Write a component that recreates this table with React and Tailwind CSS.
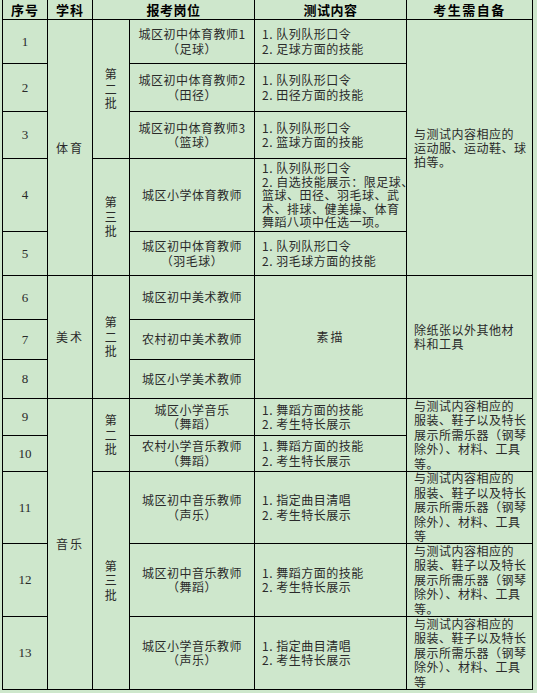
import React from "react";

const F = { fontFamily: '"Noto Sans CJK SC", "Noto Sans", sans-serif' };

function Cell({ className = "", children }) {
  return (
    <div className={"bg-[#cee7cc] overflow-hidden text-[12px] tracking-[0.5px] text-[#2a2a2a] " + className}>
      {children}
    </div>
  );
}

function Lines({ lines, className = "" }) {
  return (
    <div className={"flex flex-col " + className}>
      {lines.map((l, i) => (
        <span key={i} className="whitespace-pre">{l}</span>
      ))}
    </div>
  );
}

function Vert({ text }) {
  return (
    <div className="flex flex-col items-center leading-[14.5px]">
      {text.split("").map((c, i) => (
        <span key={i}>{c}</span>
      ))}
    </div>
  );
}

function Num({ n, row }) {
  return (
    <Cell className={"col-start-1 flex items-center justify-center " + row}>
      <span className="text-[13px] tracking-normal" style={{ fontFamily: '"Liberation Serif", serif' }}>{n}</span>
    </Cell>
  );
}

const music = ["与测试内容相应的", "服装、鞋子以及特长", "展示所需乐器（钢琴", "除外）、材料、工具"];

export default function App() {
  return (
    <div className="w-full h-[693px] bg-[#cee7cc] overflow-hidden" style={F}>
      <div
        className="ml-[2px] w-[531px] bg-black grid gap-px px-px pb-px grid-cols-[44px_44px_36px_124px_151px_125px] grid-rows-[19px_43px_47px_46px_72px_43px_43px_39px_38px_36px_35px_71px_72px_72px]"
      >
        {/* header */}
        <Cell className="row-start-1 col-start-1 flex items-center justify-center font-bold text-[13px] text-black tracking-[1px]">序号</Cell>
        <Cell className="row-start-1 col-start-2 flex items-center justify-center font-bold text-[13px] text-black tracking-[1px]">学科</Cell>
        <Cell className="row-start-1 col-start-3 col-span-2 flex items-center justify-center font-bold text-[13px] text-black tracking-[0.5px]">报考岗位</Cell>
        <Cell className="row-start-1 col-start-5 flex items-center justify-center font-bold text-[13px] text-black tracking-[0.5px]">测试内容</Cell>
        <Cell className="row-start-1 col-start-6 flex items-center justify-center font-bold text-[13px] text-black tracking-[1.5px]">考生需自备</Cell>

        {/* numbers */}
        <Num n="1" row="row-start-2" />
        <Num n="2" row="row-start-3" />
        <Num n="3" row="row-start-4" />
        <Num n="4" row="row-start-5" />
        <Num n="5" row="row-start-6" />
        <Num n="6" row="row-start-7" />
        <Num n="7" row="row-start-8" />
        <Num n="8" row="row-start-9" />
        <Num n="9" row="row-start-10" />
        <Num n="10" row="row-start-11" />
        <Num n="11" row="row-start-12" />
        <Num n="12" row="row-start-13" />
        <Num n="13" row="row-start-14" />

        {/* subjects */}
        <Cell className="col-start-2 row-start-2 row-span-5 flex items-center justify-center tracking-[2px]">体育</Cell>
        <Cell className="col-start-2 row-start-7 row-span-3 flex items-center justify-center tracking-[2px]">美术</Cell>
        <Cell className="col-start-2 row-start-10 row-span-5 flex items-center justify-center tracking-[2px]">音乐</Cell>

        {/* batches */}
        <Cell className="col-start-3 row-start-2 row-span-3 flex items-center justify-center"><Vert text="第二批" /></Cell>
        <Cell className="col-start-3 row-start-5 row-span-2 flex items-center justify-center"><Vert text="第三批" /></Cell>
        <Cell className="col-start-3 row-start-7 row-span-3 flex items-center justify-center"><Vert text="第二批" /></Cell>
        <Cell className="col-start-3 row-start-10 row-span-2 flex items-center justify-center"><Vert text="第二批" /></Cell>
        <Cell className="col-start-3 row-start-12 row-span-3 flex items-center justify-center"><Vert text="第三批" /></Cell>

        {/* posts */}
        {[
          ["row-start-2", ["城区初中体育教师1", "（足球）"]],
          ["row-start-3", ["城区初中体育教师2", "（田径）"]],
          ["row-start-4", ["城区初中体育教师3", "（篮球）"]],
          ["row-start-5", ["城区小学体育教师"]],
          ["row-start-6", ["城区初中体育教师", "（羽毛球）"]],
          ["row-start-7", ["城区初中美术教师"]],
          ["row-start-8", ["农村初中美术教师"]],
          ["row-start-9", ["城区小学美术教师"]],
          ["row-start-10", ["城区小学音乐", "（舞蹈）"]],
          ["row-start-11", ["农村小学音乐教师", "（舞蹈）"]],
          ["row-start-12", ["城区初中音乐教师", "（声乐）"]],
          ["row-start-13", ["城区初中音乐教师", "（舞蹈）"]],
          ["row-start-14", ["城区小学音乐教师", "（声乐）"]],
        ].map(([r, lines], i) => (
          <Cell key={i} className={"col-start-4 flex items-center justify-center " + r}>
            <Lines lines={lines} className="items-center leading-[14.5px]" />
          </Cell>
        ))}

        {/* test contents */}
        <Cell className="col-start-5 row-start-2 flex items-center pl-[7px]"><Lines lines={["1. 队列队形口令", "2. 足球方面的技能"]} className="leading-[14.5px]" /></Cell>
        <Cell className="col-start-5 row-start-3 flex items-center pl-[7px]"><Lines lines={["1. 队列队形口令", "2. 田径方面的技能"]} className="leading-[14.5px]" /></Cell>
        <Cell className="col-start-5 row-start-4 flex items-center pl-[7px]"><Lines lines={["1. 队列队形口令", "2. 篮球方面的技能"]} className="leading-[14.5px]" /></Cell>
        <Cell className="col-start-5 row-start-5 flex items-center pl-[7px]">
          <Lines
            lines={["1. 队列队形口令", "2. 自选技能展示：限足球、", "篮球、田径、羽毛球、武", "术、排球、健美操、体育", "舞蹈八项中任选一项。"]}
            className="leading-[13.5px]"
          />
        </Cell>
        <Cell className="col-start-5 row-start-6 flex items-center pl-[7px]"><Lines lines={["1. 队列队形口令", "2. 羽毛球方面的技能"]} className="leading-[14.5px]" /></Cell>
        <Cell className="col-start-5 row-start-7 row-span-3 flex items-center justify-center tracking-[2px]">素描</Cell>
        <Cell className="col-start-5 row-start-10 flex items-center pl-[7px]"><Lines lines={["1. 舞蹈方面的技能", "2. 考生特长展示"]} className="leading-[14.5px]" /></Cell>
        <Cell className="col-start-5 row-start-11 flex items-center pl-[7px]"><Lines lines={["1. 舞蹈方面的技能", "2. 考生特长展示"]} className="leading-[14.5px]" /></Cell>
        <Cell className="col-start-5 row-start-12 flex items-center pl-[7px]"><Lines lines={["1. 指定曲目清唱", "2. 考生特长展示"]} className="leading-[14.5px]" /></Cell>
        <Cell className="col-start-5 row-start-13 flex items-center pl-[7px]"><Lines lines={["1. 舞蹈方面的技能", "2. 考生特长展示"]} className="leading-[14.5px]" /></Cell>
        <Cell className="col-start-5 row-start-14 flex items-center pl-[7px]"><Lines lines={["1. 指定曲目清唱", "2. 考生特长展示"]} className="leading-[14.5px]" /></Cell>

        {/* self-prepared */}
        <Cell className="col-start-6 row-start-2 row-span-5 flex items-center pl-[7px]">
          <Lines lines={["与测试内容相应的", "运动服、运动鞋、球", "拍等。"]} className="leading-[14px]" />
        </Cell>
        <Cell className="col-start-6 row-start-7 row-span-3 flex items-center pl-[7px]">
          <Lines lines={["除纸张以外其他材", "料和工具"]} className="leading-[14px]" />
        </Cell>
        <Cell className="col-start-6 row-start-10 row-span-2 flex items-center pl-[7px]">
          <Lines lines={[...music, "等。"]} className="leading-[14.5px]" />
        </Cell>
        <Cell className="col-start-6 row-start-12 flex items-center pl-[7px]">
          <Lines lines={[...music, "等"]} className="leading-[14.5px]" />
        </Cell>
        <Cell className="col-start-6 row-start-13 flex items-center pl-[7px]">
          <Lines lines={[...music, "等。"]} className="leading-[14.5px]" />
        </Cell>
        <Cell className="col-start-6 row-start-14 flex items-center pl-[7px]">
          <Lines lines={[...music, "等"]} className="leading-[14.5px]" />
        </Cell>
      </div>
    </div>
  );
}
